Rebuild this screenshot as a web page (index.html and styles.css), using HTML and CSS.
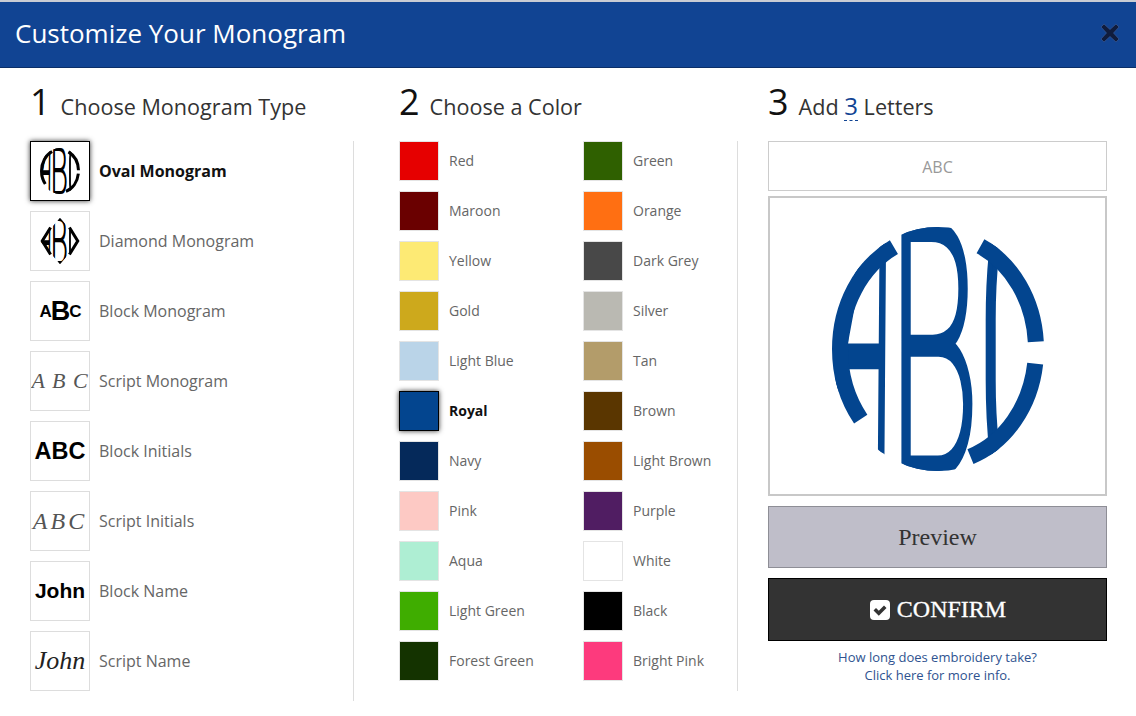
FILE: index.html
```html
<!DOCTYPE html>
<html lang="en">
<head>
<meta charset="utf-8">
<title>Customize Your Monogram</title>
<link rel="stylesheet" href="styles.css">
</head>
<body>
<svg class="defs" width="0" height="0" aria-hidden="true">
  <defs>
    <clipPath id="oval"><ellipse cx="106" cy="122" rx="106" ry="122"/></clipPath>
    <clipPath id="diamond"><polygon points="106,0 212,122 106,244 0,122"/></clipPath>
    <symbol id="oval-mono" viewBox="0 0 212 244">
      <g clip-path="url(#oval)">
        <text class="mono-letter" transform="translate(-12 232) skewX(-5.500) scale(1.080 4.550)">A</text>
        <text class="mono-letter" transform="translate(58 244) scale(1.450 3.440)">B</text>
        <text class="mono-letter" transform="translate(142 322) scale(2 5.600)">C</text>
      </g>
      <ellipse class="mono-ring mono-ring-a" cx="106" cy="122" rx="98" ry="114" pathLength="360"/>
      <ellipse class="mono-ring mono-ring-c1" cx="106" cy="122" rx="98" ry="114" pathLength="360"/>
      <ellipse class="mono-ring mono-ring-c2" cx="106" cy="122" rx="98" ry="114" pathLength="360"/>
    </symbol>
    <symbol id="diamond-mono" viewBox="0 0 212 244">
      <g clip-path="url(#diamond)">
        <text class="mono-letter" transform="translate(-12 232) skewX(-5.500) scale(1.080 4.550)">A</text>
        <text class="mono-letter" transform="translate(58 244) scale(1.450 3.440)">B</text>
        <text class="mono-letter" transform="translate(142 322) scale(2 5.600)">C</text>
      </g>
      <polyline class="mono-ring" points="56,50 12,122 56,194"/>
      <polyline class="mono-ring" points="156,50 200,122 156,194"/>
    </symbol>
  </defs>
</svg>

<header class="topbar">
  <h1 class="topbar-title">Customize Your Monogram</h1>
  <button class="close" type="button" aria-label="Close">
    <svg viewBox="0 0 20 20" width="20" height="20"><path d="M4 1l6 5.500L16 1l3 3-5.500 6 5.500 6-3 3-6-5.500L4 19l-3-3 5.500-6L1 4z"/></svg>
  </button>
</header>

<main class="steps">
  <section class="step step-type">
    <h2 class="step-head"><span class="step-num">1</span><span>Choose Monogram Type</span></h2>
    <ul class="type-list">
      <li class="type selected"><span class="thumb"><svg class="thumb-mono" viewBox="0 0 212 244"><use href="#oval-mono"/></svg></span>Oval Monogram</li>
      <li class="type"><span class="thumb"><svg class="thumb-mono" viewBox="0 0 212 244"><use href="#diamond-mono"/></svg></span>Diamond Monogram</li>
      <li class="type"><span class="thumb thumb-block-mono">A<b>B</b>C</span>Block Monogram</li>
      <li class="type"><span class="thumb thumb-script thumb-script-mono">A B C</span>Script Monogram</li>
      <li class="type"><span class="thumb thumb-block">ABC</span>Block Initials</li>
      <li class="type"><span class="thumb thumb-script thumb-script-init">ABC</span>Script Initials</li>
      <li class="type"><span class="thumb thumb-name">John</span>Block Name</li>
      <li class="type"><span class="thumb thumb-script thumb-script-name">John</span>Script Name</li>
    </ul>
  </section>

  <section class="step step-color">
    <h2 class="step-head"><span class="step-num">2</span><span>Choose a Color</span></h2>
    <ul class="color-grid">
      <li class="color"><span class="swatch c-red"></span>Red</li>
      <li class="color"><span class="swatch c-green"></span>Green</li>
      <li class="color"><span class="swatch c-maroon"></span>Maroon</li>
      <li class="color"><span class="swatch c-orange"></span>Orange</li>
      <li class="color"><span class="swatch c-yellow"></span>Yellow</li>
      <li class="color"><span class="swatch c-darkgrey"></span>Dark Grey</li>
      <li class="color"><span class="swatch c-gold"></span>Gold</li>
      <li class="color"><span class="swatch c-silver"></span>Silver</li>
      <li class="color"><span class="swatch c-lightblue"></span>Light Blue</li>
      <li class="color"><span class="swatch c-tan"></span>Tan</li>
      <li class="color selected"><span class="swatch c-royal"></span>Royal</li>
      <li class="color"><span class="swatch c-brown"></span>Brown</li>
      <li class="color"><span class="swatch c-navy"></span>Navy</li>
      <li class="color"><span class="swatch c-lightbrown"></span>Light Brown</li>
      <li class="color"><span class="swatch c-pink"></span>Pink</li>
      <li class="color"><span class="swatch c-purple"></span>Purple</li>
      <li class="color"><span class="swatch c-aqua"></span>Aqua</li>
      <li class="color"><span class="swatch c-white"></span>White</li>
      <li class="color"><span class="swatch c-lightgreen"></span>Light Green</li>
      <li class="color"><span class="swatch c-black"></span>Black</li>
      <li class="color"><span class="swatch c-forest"></span>Forest Green</li>
      <li class="color"><span class="swatch c-brightpink"></span>Bright Pink</li>
    </ul>
  </section>

  <section class="step step-letters">
    <h2 class="step-head"><span class="step-num">3</span><span>Add <abbr class="count">3</abbr> Letters</span></h2>
    <input class="letters" type="text" value="ABC" aria-label="Letters">
    <div class="preview-box">
      <svg class="big-mono" viewBox="0 0 212 244" width="212" height="244"><use href="#oval-mono"/></svg>
    </div>
    <button class="btn btn-preview" type="button">Preview</button>
    <button class="btn btn-confirm" type="button">
      <svg class="check" viewBox="0 0 22 22" width="22" height="22"><rect x="1" y="1" width="20" height="20" rx="4" fill="#fff"/><path d="M4.500 11.500l2.500-2.500 2.800 2.800L15 6.500l2.500 2.500-7.700 7.700z" fill="#333"/></svg><span class="confirm-label">CONFIRM</span>
    </button>
    <p class="info"><a href="#">How long does embroidery take?<br>Click here for more info.</a></p>
  </section>
</main>
</body>
</html>
```

FILE: styles.css
```css
* { box-sizing: border-box; }
html, body { margin: 0; padding: 0; }
body {
  width: 1136px;
  height: 716px;
  overflow: hidden;
  background: #fff;
  font-family: "Open Sans", "Liberation Sans", sans-serif;
  color: #666;
}
ul { list-style: none; margin: 0; padding: 0; }
.defs { position: absolute; }

.topbar {
  height: 68px;
  border-top: 2px solid #c9ccd4;
  border-bottom: 1px solid #0b2f68;
  background: #114493;
  display: flex;
  align-items: center;
  justify-content: space-between;
  padding: 0 16px 3px 15px;
}
.topbar-title {
  margin: 0;
  font-size: 26px;
  font-weight: 400;
  line-height: 36px;
  color: #fff;
}
.close {
  border: 0;
  background: none;
  padding: 0;
  width: 20px;
  height: 20px;
  display: flex;
}
.close path {
  fill: #101c3c;
  stroke: #3f5f9c;
  stroke-width: .6;
}

.steps { display: flex; height: 648px; }
.step { display: flex; flex-direction: column; }
.step-type { width: 354px; padding-left: 30px; }
.step-color { width: 384px; padding-left: 45px; }
.step-letters { width: 370px; padding-left: 30px; }

.step-head {
  margin: 12px 0 0;
  height: 44px;
  display: flex;
  align-items: baseline;
  font-size: 21.600px;
  font-weight: 400;
  line-height: 44px;
  color: #333;
  white-space: pre;
}
.step-num { font-size: 36px; color: #111; margin-right: 10px; }
.count {
  color: #114493;
  font-size: 24px;
  text-decoration: none;
  border-bottom: 1px dashed #114493;
  line-height: 28px;
  display: inline-block;
}

.type-list {
  margin-top: 17px;
  margin-left: -30px;
  padding-left: 30px;
  height: 560px;
  border-right: 1px solid #ddd;
  display: flex;
  flex-direction: column;
  gap: 10px;
}
.type {
  height: 60px;
  display: flex;
  align-items: center;
  gap: 9px;
  font-size: 16px;
  color: #666;
}
.type.selected { font-weight: 700; color: #111; }
.thumb {
  flex: none;
  width: 60px;
  height: 60px;
  border: 1px solid #ddd;
  background: #fff;
  display: flex;
  align-items: center;
  justify-content: center;
  color: #000;
  font-family: "Liberation Sans", sans-serif;
  font-weight: 700;
  overflow: hidden;
}
.type.selected .thumb {
  border-color: #000;
  box-shadow: 0 0 5px rgba(0, 0, 0, .8);
}
.thumb-mono { width: 40px; height: 50px; stroke-width: 1.800px; }
.thumb-block-mono { font-size: 17px; line-height: 1; letter-spacing: -1px; }
.thumb-block-mono b { font-size: 27px; }
.thumb-block { font-size: 23.500px; }
.thumb-name { font-size: 21px; }
.thumb-script {
  font-family: "Liberation Serif", serif;
  font-style: italic;
  font-weight: 400;
  color: #555;
  white-space: nowrap;
}
.thumb-script-mono { font-size: 22px; letter-spacing: 1px; }
.thumb-script-init { font-size: 24px; letter-spacing: 3px; }
.thumb-script-name { font-size: 26px; color: #222; }

.mono-letter {
  font-family: "Roboto", "Liberation Sans", sans-serif;
  font-weight: 100;
  font-size: 100px;
  fill: currentColor;
  stroke: currentColor;
  vector-effect: non-scaling-stroke;
}
.mono-ring {
  fill: none;
  stroke: currentColor;
  stroke-width: 16;
}
.mono-ring-a { stroke-dasharray: 105 255; stroke-dashoffset: -140; }
.mono-ring-c1 { stroke-dasharray: 62 298; stroke-dashoffset: -294; }
.mono-ring-c2 { stroke-dasharray: 64 296; stroke-dashoffset: -8; }

.color-grid {
  margin-top: 17px;
  margin-left: -45px;
  padding-left: 45px;
  height: 550px;
  border-right: 1px solid #ddd;
  display: grid;
  grid-template-columns: 184px 1fr;
  grid-auto-rows: 40px;
  row-gap: 10px;
  align-content: start;
}
.color {
  display: flex;
  align-items: flex-start;
  gap: 10px;
  font-size: 14px;
  line-height: 39px;
  color: #666;
}
.color.selected { font-weight: 700; color: #111; }
.swatch {
  flex: none;
  width: 40px;
  height: 40px;
  border: 1px solid #e4e4e4;
}
.color.selected .swatch {
  border-color: #000;
  box-shadow: 0 0 5px rgba(0, 0, 0, .8);
}
.c-red { background: #e60000; }
.c-green { background: #2f6000; }
.c-maroon { background: #6a0000; }
.c-orange { background: #ff6f12; }
.c-yellow { background: #fdea74; }
.c-darkgrey { background: #484848; }
.c-gold { background: #cda91c; }
.c-silver { background: #bab9b2; }
.c-lightblue { background: #bad4e8; }
.c-tan { background: #b39c6a; }
.c-royal { background: #03458f; }
.c-brown { background: #5a3600; }
.c-navy { background: #05295a; }
.c-lightbrown { background: #9a4d00; }
.c-pink { background: #fdc9c4; }
.c-purple { background: #501d62; }
.c-aqua { background: #aeeed3; }
.c-white { background: #fff; }
.c-lightgreen { background: #3fad00; }
.c-black { background: #000; }
.c-forest { background: #143300; }
.c-brightpink { background: #fd3a7d; }

.letters {
  margin-top: 17px;
  width: 339px;
  height: 50px;
  padding-top: 2px;
  border: 1px solid #ccc;
  background: #fff;
  text-align: center;
  font: 400 16px "Open Sans", sans-serif;
  color: #999;
  outline: none;
}
.preview-box {
  margin-top: 5px;
  width: 339px;
  height: 300px;
  border: 2px solid #c8c8c8;
  display: flex;
  align-items: center;
  justify-content: center;
  padding-top: 6px;
  color: #03458f;
}
.big-mono { stroke-width: 10px; }
.btn {
  width: 339px;
  display: flex;
  align-items: center;
  justify-content: center;
  font-family: "Liberation Serif", serif;
  font-size: 24px;
}
.btn-preview {
  margin-top: 10px;
  height: 62px;
  background: #bfbec9;
  border: 1px solid #8e8e96;
  color: #333;
}
.btn-confirm {
  margin-top: 10px;
  height: 63px;
  gap: 6px;
  background: #333;
  border: 1px solid #000;
  color: #fff;
}
.confirm-label { -webkit-text-stroke: .3px #fff; }
.info {
  margin: 7px 0 0;
  width: 339px;
  text-align: center;
  font-size: 13px;
  line-height: 18px;
}
.info a { color: #2f5390; text-decoration: none; }
```
